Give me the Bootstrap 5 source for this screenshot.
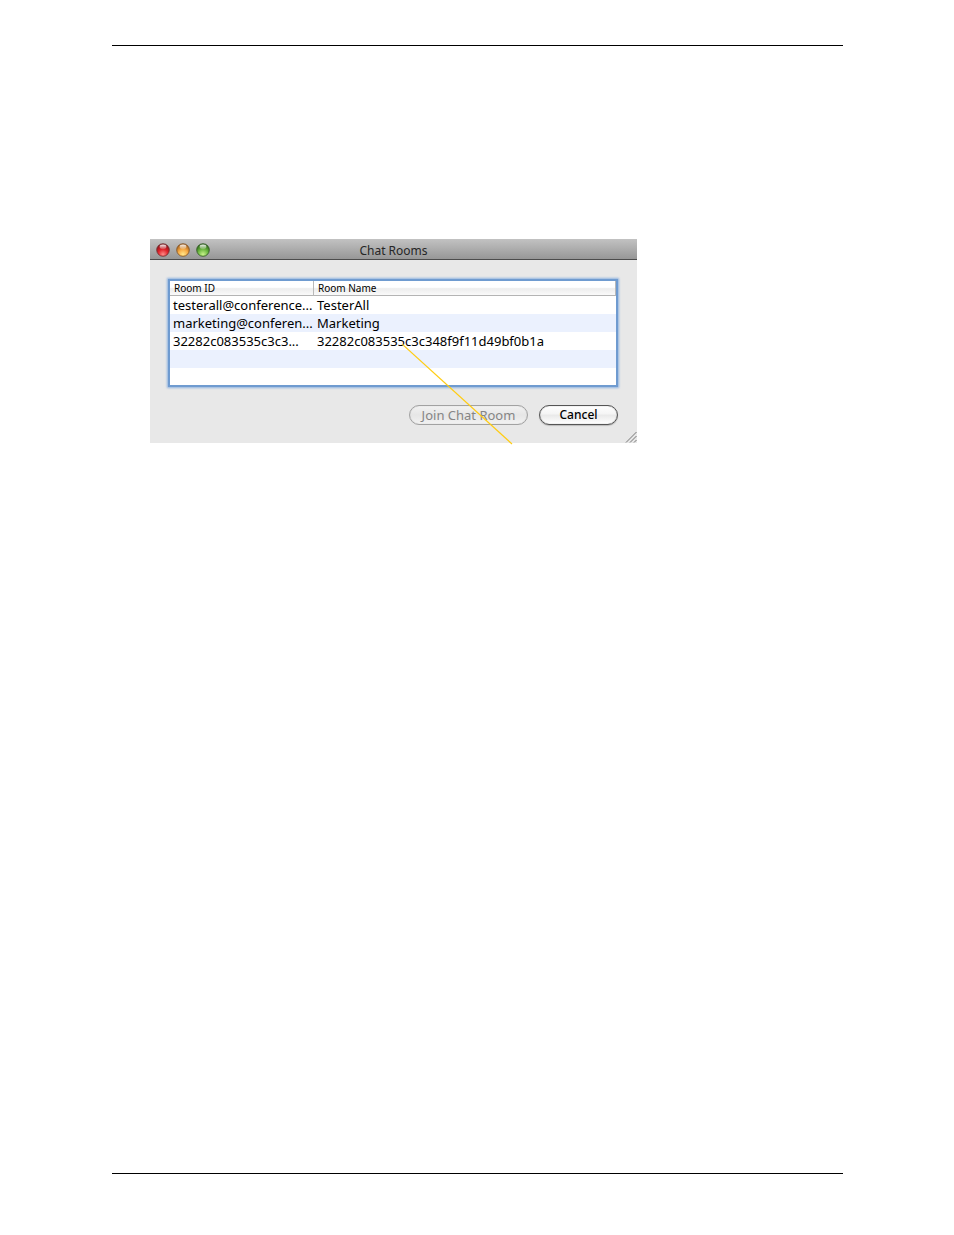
<!DOCTYPE html>
<html lang="en">
<head>
<meta charset="utf-8">
<meta name="viewport" content="width=device-width, initial-scale=1">
<title>Chat Rooms</title>
<link rel="stylesheet" href="https://cdn.jsdelivr.net/npm/bootstrap@5.3.0/dist/css/bootstrap.min.css">
<style>
  .sheet { padding: 45px 111px 61px 112px; background: #fff; }
  .sheet-body { border-top: 1px solid #000; border-bottom: 1px solid #000; padding: 193px 38px 0; }
  .chat-window { max-width: 487px; background: #e8e8e8; color: #000; font-family: "Noto Sans", "Open Sans", sans-serif; }
  .title-bar { height: 21px; background: linear-gradient(#c2c2c2, #979797); border-bottom: 1px solid #4c4c4c; }
  .title-bar h1 { font-size: 12px; line-height: 23px; font-weight: 400; color: #262626; }
  .lights { gap: 6px; top: 4px; left: 6px; }
  .light { width: 14px; height: 14px; padding: 0; border: 0; background: none; }
  .light svg { display: block; }
  .window-body { padding: 19px 19px 18px 18px; }
  .list-frame { border: 2px solid #6f9bd0; box-shadow: 0 0 2px 1px #8fb3e0; background: #fff; margin-bottom: 18px; }
  .rooms { width: 100%; table-layout: fixed; border-collapse: separate; border-spacing: 0; }
  .rooms .id-col { width: 144px; }
  .rooms th { height: 15px; padding: 0 3px 0 4px; font-size: 10px; line-height: 12px; font-weight: 400; border-bottom: 1px solid #b4b4b4; background: linear-gradient(#fff 0 45%, #ededed 55%, #fafafa); }
  .rooms th:first-child, .rooms th:last-child { border-right: 1px solid #b9b9b9; }
  .rooms td { height: 18px; padding: 0 3px; font-size: 13px; line-height: 18px; white-space: nowrap; }
  .rooms tbody tr:nth-child(even) td { background: #ebf1fe; }
  .rooms tbody tr:last-child td { height: 17px; }
  .pill { height: 20px; padding: 0; font-size: 13px; line-height: 18px; border: 1px solid #555; border-radius: 10px; color: #000; background: linear-gradient(#fff, #f4f4f4 45%, #e9e9e9 50%, #fff); box-shadow: inset 0 0 1px #777, 0 1px 1px #bbb; }
  .pill:disabled { color: #858585; border-color: #a2a2a2; background: linear-gradient(#f2f2f2, #e6e6e6 50%, #f2f2f2); box-shadow: inset 0 0 1px #bbb; opacity: 1; }
  .pill-wide { width: 119px; }
  .pill-short { width: 79px; font-size: 12px; font-weight: 500; }
  .actions { gap: 11px; }
  .grip { right: 0; bottom: 0; }
  .callout-line { left: 252px; top: 105px; pointer-events: none; }
</style>
</head>
<body>
<div class="sheet d-flex flex-column min-vh-100">
  <main class="sheet-body flex-grow-1">
    <section class="chat-window position-relative" aria-labelledby="window-title">
      <svg width="0" height="0" class="position-absolute" aria-hidden="true">
        <defs>
          <radialGradient id="red" cx=".5" cy=".85" r=".8"><stop offset="0" stop-color="#ff8c88"/><stop offset=".5" stop-color="#e0242b"/><stop offset="1" stop-color="#850f16"/></radialGradient>
          <radialGradient id="amber" cx=".5" cy=".85" r=".8"><stop offset="0" stop-color="#ffe88c"/><stop offset=".5" stop-color="#f7ab45"/><stop offset="1" stop-color="#a05a18"/></radialGradient>
          <radialGradient id="green" cx=".5" cy=".85" r=".8"><stop offset="0" stop-color="#c8f28c"/><stop offset=".5" stop-color="#6fb943"/><stop offset="1" stop-color="#286414"/></radialGradient>
          <linearGradient id="shine" x2="0" y2="1"><stop offset="0" stop-color="#fff" stop-opacity=".95"/><stop offset="1" stop-color="#fff" stop-opacity=".15"/></linearGradient>
        </defs>
      </svg>
      <header class="title-bar position-relative">
        <div class="lights d-flex position-absolute">
          <button class="light" type="button" aria-label="Close"><svg width="14" height="14"><circle cx="7" cy="7" r="6.3" fill="url(#red)" stroke="#6b3030" stroke-width=".8"/><ellipse cx="7" cy="3.8" rx="3.4" ry="2.4" fill="url(#shine)"/></svg></button>
          <button class="light" type="button" aria-label="Minimize"><svg width="14" height="14"><circle cx="7" cy="7" r="6.3" fill="url(#amber)" stroke="#7d5022" stroke-width=".8"/><ellipse cx="7" cy="3.8" rx="3.4" ry="2.4" fill="url(#shine)"/></svg></button>
          <button class="light" type="button" aria-label="Zoom"><svg width="14" height="14"><circle cx="7" cy="7" r="6.3" fill="url(#green)" stroke="#2f5522" stroke-width=".8"/><ellipse cx="7" cy="3.8" rx="3.4" ry="2.4" fill="url(#shine)"/></svg></button>
        </div>
        <h1 id="window-title" class="m-0 text-center">Chat Rooms</h1>
      </header>
      <div class="window-body">
        <div class="list-frame">
          <table class="rooms">
            <colgroup><col class="id-col"><col></colgroup>
            <thead><tr><th scope="col">Room ID</th><th scope="col">Room Name</th></tr></thead>
            <tbody>
              <tr><td>testerall@conference...</td><td>TesterAll</td></tr>
              <tr><td>marketing@conferen...</td><td>Marketing</td></tr>
              <tr><td>32282c083535c3c3...</td><td>32282c083535c3c348f9f11d49bf0b1a</td></tr>
              <tr><td></td><td></td></tr>
              <tr><td></td><td></td></tr>
            </tbody>
          </table>
        </div>
        <div class="actions d-flex justify-content-end">
          <button class="pill pill-wide" type="button" disabled>Join Chat Room</button>
          <button class="pill pill-short" type="button">Cancel</button>
        </div>
      </div>
      <svg class="grip position-absolute" width="12" height="12" aria-hidden="true"><path d="M1 11.500L11.500 1M5 11.500L11.500 5M9 11.500L11.500 9" stroke="#777" fill="none"/></svg>
      <svg class="callout-line position-absolute" width="111" height="101" aria-hidden="true"><path d="M0 0L110 100" stroke="#fc1" stroke-width="1.200"/></svg>
    </section>
  </main>
</div>
<script src="https://cdn.jsdelivr.net/npm/bootstrap@5.3.0/dist/js/bootstrap.bundle.min.js"></script>
</body>
</html>
